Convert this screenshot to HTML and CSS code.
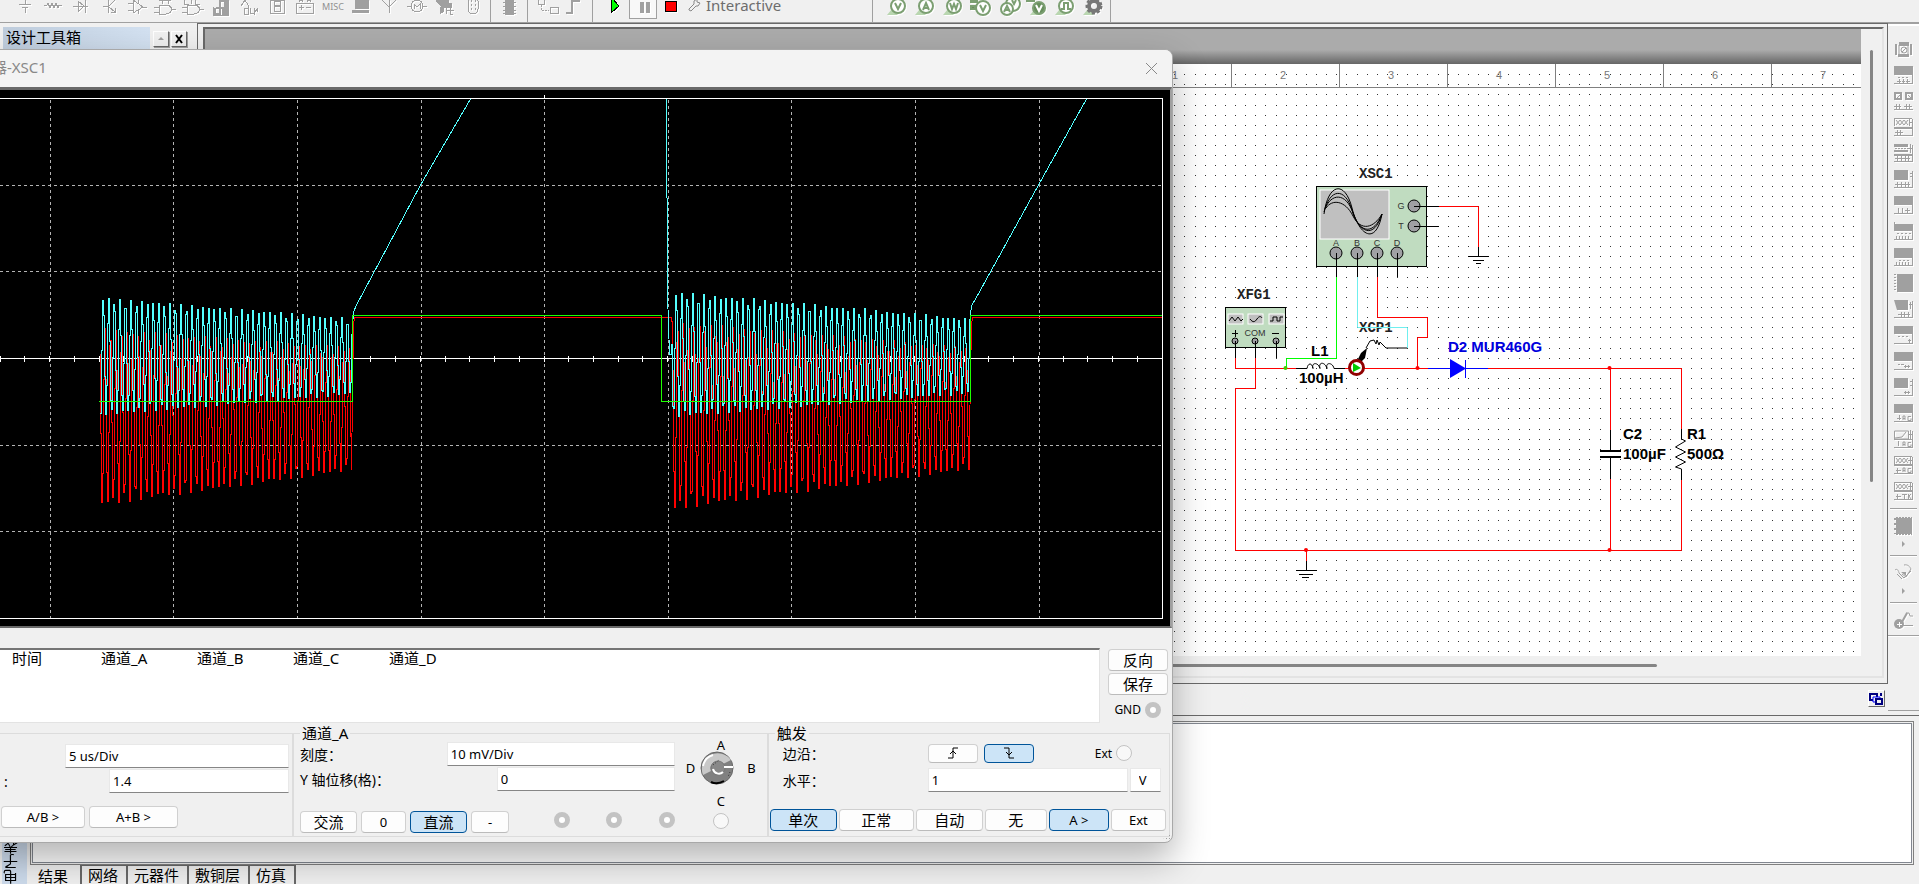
FILE: index.html
```html
<!DOCTYPE html>
<html lang="zh-CN">
<head>
    <meta charset="UTF-8">
    <meta name="viewport" content="width=device-width, initial-scale=1.0">
    <title>XSC1</title>
    <link rel="stylesheet" href="styles.css">
</head>
<body>
    <!-- Component, simulation and probe toolbars -->
    <header class="toolbar">
        <div class="tool-group components">
            <button class="tool" aria-label="Source"><svg viewBox="0 0 28 22"><path d="M8 4h12M11 7h6M14 0v4M14 7v6"/></svg></button>
            <button class="tool" aria-label="Basic"><svg viewBox="0 0 28 22"><path d="M5 5h3l1-2 2 5 2-5 2 5 2-5 2 5 1-3h3"/></svg></button>
            <button class="tool" aria-label="Diode"><svg viewBox="0 0 28 22"><path d="M6 6h15M11 1v11l6-6zM18 0v13"/></svg></button>
            <button class="tool" aria-label="Transistor"><svg viewBox="0 0 28 22"><path d="M8 6h5M13 0v13M14 6l6-6M14 7l6 5M16 12h4v-4"/></svg></button>
            <button class="tool" aria-label="Analog"><svg viewBox="0 0 28 22"><path d="M5 3h5M5 10h5M10 0v13l10-6zM20 7h4M15 0v3M15 10v4"/></svg></button>
            <button class="tool" aria-label="TTL"><svg viewBox="0 0 28 22"><path d="M8 0h12M11 0v4M17 0v4M8 5h7c4 0 5 2 6 4-1 3-2 5-6 5H8zM3 7h5M3 12h5M21 9h4"/></svg></button>
            <button class="tool" aria-label="CMOS"><svg viewBox="0 0 28 22"><path d="M5 0v4h5M12 0v4M16 0v4h5M8 5h7c4 0 5 2 6 4-1 3-2 5-6 5H8zM3 7h5M3 12h5M21 9h4"/></svg></button>
            <button class="tool" aria-label="Misc digital"><svg viewBox="0 0 28 22"><path stroke-width="2" d="M8 8v6h5V1h7v13h-4V8h-7M18 0v15"/><path d="M6 7v8h15V0"/></svg></button>
            <button class="tool" aria-label="Mixed"><svg viewBox="0 0 28 22"><path d="M6 6l4-6 3 5v3M9 8v6h4V8zM15 8v5l4 1V8M18 14l5-6M22 8v4"/></svg></button>
            <button class="tool" aria-label="Indicator"><svg viewBox="0 0 28 22"><path d="M7 0h14v13H7zM11 1h6v4h-6zM11 6h6v5h-6z"/></svg></button>
            <button class="tool" aria-label="Power"><svg viewBox="0 0 28 22"><path d="M5 3h17v10H5zM8 2V0h3v2M16 2V0h3v2M8 7h5M10 5v5M15 7h5"/></svg></button>
            <button class="tool misc">MISC</button>
            <button class="tool" aria-label="Advanced peripherals"><svg viewBox="0 0 28 22"><path class="solid" d="M8 0h14v9H8zM5 10h17v3H5z"/></svg></button>
            <button class="tool" aria-label="RF"><svg viewBox="0 0 28 22"><path d="M7 0l7 7 7-7M14 0v13"/></svg></button>
            <button class="tool" aria-label="Electromechanical"><svg viewBox="0 0 28 22"><circle cx="14" cy="6" r="6"/><path d="M4 6h4M20 6h4M11 9V4l3 3 3-3v5"/></svg></button>
            <button class="tool" aria-label="NI components"><svg viewBox="0 0 28 22"><path class="solid" d="M5 0h13v3h3v5h-10l-5-5zM9 7h4v5l-4 2z"/><path d="M15 8v6M19 6v8h3M16 10h7"/></svg></button>
            <button class="tool" aria-label="Connectors"><svg viewBox="0 0 28 22"><rect x="9" y="-4" width="10" height="18" rx="5"/><path stroke-dasharray="2 2" d="M12 0v12M16 0v12"/></svg></button>
        </div>
        <div class="tool-group">
            <button class="tool" aria-label="MCU"><svg viewBox="0 0 28 22"><path class="solid" d="M10 0h9v15h-9z"/><path d="M8 2h13M8 6h13M8 10h13M8 13h13"/></svg></button>
        </div>
        <div class="tool-group">
            <button class="tool" aria-label="Hierarchical block"><svg viewBox="0 0 28 22"><path d="M6 0v4h6V0M18 7h8v6h-8z"/><path stroke-dasharray="2 1" d="M9 5v5h8"/></svg></button>
            <button class="tool" aria-label="Bus"><svg viewBox="0 0 28 22"><path stroke-width="2" d="M6 13h6V1h8"/></svg></button>
        </div>
        <div class="tool-group simulate">
            <button class="tool" aria-label="Run"><svg viewBox="0 0 28 22"><path fill="#0f0" stroke="#000" d="M10 0v13l8-7-7-8z"/></svg></button>
            <button class="tool pause" aria-label="Pause"><svg viewBox="0 0 28 22"><path class="solid" d="M10 2h4v11h-4zM16 2h4v11h-4z"/></svg></button>
            <button class="tool" aria-label="Stop"><svg viewBox="0 0 28 22"><path fill="#f00" stroke="#000" d="M8 1h11v10H8z"/></svg></button>
            <button class="interactive"><svg viewBox="0 0 14 22"><path d="M2 9l5-5V1l3-2v3l3 1-2 3H9l-5 5-2-1z"/></svg>Interactive</button>
        </div>
        <div class="tool-group probes">
            <button class="tool" aria-label="Voltage probe"><svg viewBox="0 0 28 22"><path class="tip" d="M3 15l5-6 7 4-2 2z"/><circle cx="14" cy="6" r="7"/><path d="M11 3l3 6 3-6"/></svg></button>
            <button class="tool" aria-label="Current probe"><svg viewBox="0 0 28 22"><path class="tip" d="M3 15l5-6 7 4-2 2z"/><circle cx="14" cy="6" r="7"/><path d="M11 10l3-7 3 7M12 8h4"/></svg></button>
            <button class="tool" aria-label="Power probe"><svg viewBox="0 0 28 22"><path class="tip" d="M3 15l5-6 7 4-2 2z"/><circle cx="14" cy="6" r="7"/><path d="M10 3l2 6 2-5 2 5 2-6"/></svg></button>
            <button class="tool" aria-label="Differential probe"><svg viewBox="0 0 28 22"><path class="dark" d="M3 0h6v2H3zM3 6h4v3H3z"/><circle cx="15" cy="8" r="7"/><path d="M12 5l3 6 3-6"/></svg></button>
            <button class="tool" aria-label="Voltage and current probe"><svg viewBox="0 0 28 22"><circle cx="17" cy="4" r="7"/><circle cx="11" cy="9" r="6"/><path d="M8 12l3-6 3 6M9 10h4M16 0l2 4 2-4"/></svg></button>
            <button class="tool" aria-label="Reference probe"><svg viewBox="0 0 28 22"><path class="dark" d="M3 0h7v1H3z"/><path class="tip" d="M6 15l5-6 7 4-2 2z"/><circle class="dark" cx="15" cy="8" r="6"/><path class="light" d="M12 5l3 6 3-6"/></svg></button>
            <button class="tool" aria-label="Digital probe"><svg viewBox="0 0 28 22"><path class="tip" d="M3 15l5-6 7 4-2 2z"/><circle cx="14" cy="6" r="7"/><path d="M9 9h3V3h4v6h3"/></svg></button>
            <button class="tool" aria-label="Probe settings"><svg viewBox="0 0 28 22"><path class="tip" d="M3 15l5-6 7 4-2 2z"/><circle class="gear" cx="14" cy="6" r="5"/><circle class="gear teeth" cx="14" cy="6" r="7"/></svg></button>
        </div>
    </header>

    <main class="workspace">
        <aside class="dock">
            <div class="dock-head">
                <h2>设计工具箱</h2>
                <button class="dock-button up" aria-label="Collapse"></button>
                <button class="dock-button" aria-label="Close"><svg viewBox="0 0 10 10"><path d="M2 1l6 8M8 1L2 9"/></svg></button>
            </div>
        </aside>

        <section class="center">
            <div class="mdi-frame">
                <div class="mdi">
                    <div class="sheet-area">
                        <div class="sheet-shade"></div>
                        <div class="sheet">
                            <svg class="schematic" viewBox="1100 64 761 592">
                                <path id="gridDots" fill="#333"/>
                                <g class="ruler">
                                    <path d="M1100 87.500H1861M1231.500 64V87M1339.500 64V87M1447.500 64V87M1555.500 64V87M1663.500 64V87M1771.500 64V87"/>
                                    <text x="1175" y="79">1</text><text x="1283" y="79">2</text><text x="1391" y="79">3</text><text x="1499" y="79">4</text><text x="1607" y="79">5</text><text x="1715" y="79">6</text><text x="1823" y="79">7</text>
                                </g>

                                <!-- Oscilloscope XSC1 -->
                                <text class="ref" x="1359" y="178">XSC1</text>
                                <rect class="instrument" x="1316.500" y="186.500" width="110" height="80"/>
                                <rect class="screen" x="1320" y="190" width="69" height="49"/>
                                <path class="line" d="M1324 214C1328 183 1345 180 1352 208S1376 246 1382 214M1324 212C1330 188 1345 187 1352 210S1374 240 1382 214M1325 209C1331 193 1346 192 1353 213S1374 235 1382 214M1326 208C1332 199 1345 200 1353 216S1374 228 1382 214"/>
                                <g class="pin"><circle cx="1414" cy="206" r="6"/><circle cx="1414" cy="226" r="6"/><circle cx="1336" cy="253" r="6"/><circle cx="1357" cy="253" r="6"/><circle cx="1377" cy="253" r="6"/><circle cx="1397" cy="253" r="6"/></g>
                                <g class="pin-name"><text x="1401" y="209">G</text><text x="1401" y="229">T</text><text x="1336" y="246">A</text><text x="1357" y="246">B</text><text x="1377" y="246">C</text><text x="1397" y="246">D</text></g>
                                <path class="line" d="M1414 206.500H1439M1414 226.500H1439M1336.500 253V277M1357.500 253V277M1377.500 253V277M1397.500 253V277"/>
                                <path class="wire" d="M1439 206.500H1478.500V247"/>
                                <path class="line" d="M1478.500 247V256.500M1468 256.500H1489M1473 260.500H1484M1476 263.500H1481"/>

                                <!-- Function generator XFG1 -->
                                <text class="ref" x="1237" y="299">XFG1</text>
                                <rect class="instrument" x="1225.500" y="307.500" width="60" height="40"/>
                                <g class="screen"><rect x="1228" y="314" width="15" height="10"/><rect x="1248" y="314" width="15" height="10"/><rect x="1269" y="314" width="15" height="10"/></g>
                                <path class="line" d="M1229 321l3-4 3 4 3-4 3 4 2-2M1250 319c3 4 5 3 7 0s4-3 5-1M1270 321h3v-4h4v4h3v-4h3"/>
                                <path class="line" d="M1232 333.500h6M1235.500 330v7M1272 333.500h7"/>
                                <text class="com" x="1255" y="336">COM</text>
                                <g class="pin"><circle cx="1235" cy="341" r="3"/><circle cx="1255" cy="341" r="3"/><circle cx="1276" cy="341" r="3"/></g>
                                <path class="line" d="M1235.500 341V358M1255.500 341V358M1276.500 341V358"/>

                                <!-- Nets -->
                                <path class="wire" d="M1235.500 358V368.500H1296M1255.500 358V388.500H1235.500V550.500H1681.500V480M1345 368.500H1428M1488 368.500H1681.500V429M1610.500 368V430M1610.500 479V550M1377.500 277V317.500H1427.500V337.500H1417.500V368M1306.500 550V561"/>
                                <path class="wire green" d="M1336.500 277V358.500H1286.500V368"/>
                                <text class="ref" x="1359" y="332">XCP1</text>
                                <path class="wire cyan" d="M1357.500 277V327.500H1407.500V348"/>
                                <g class="node"><circle cx="1417.500" cy="368" r="2"/><circle cx="1609.500" cy="368" r="2"/><circle cx="1609.500" cy="550" r="2"/><circle cx="1306" cy="550" r="2"/><circle class="green" cx="1285.500" cy="368" r="2"/></g>
                                <path class="line" d="M1306.500 561V570.500M1296 570.500H1317M1299 574.500H1313M1302 577.500H1309"/>

                                <!-- L1 -->
                                <path class="line" d="M1296 368.500h11c1-6 5-6 6 0-2-6 5-7 7 0-2-7 5-7 7 0-2-7 6-6 7 0h11"/>
                                <text class="value" x="1311" y="356">L1</text>
                                <text class="value" x="1299" y="383">100µH</text>

                                <!-- XCP1 current clamp -->
                                <path d="M1357 361l4-8 6-5-2 10-4 4z"/>
                                <path class="line" d="M1366 348l4-7 4-1 2 4 1-4 2 5 1-3 2 2 4 4H1407"/>
                                <circle class="clamp" cx="1356.500" cy="367.500" r="7"/>
                                <path fill="#0c0" d="M1353 363l8 5-8 4z"/>

                                <!-- D2 -->
                                <path class="wire blue" d="M1428 368.500H1488M1465.500 360V378"/>
                                <path fill="#00f" d="M1450 359v19l16-9.500z"/>
                                <text class="value blue" x="1448" y="352">D2 MUR460G</text>

                                <!-- C2 and R1 -->
                                <path class="line" d="M1610.500 430V451M1610.500 457V479"/>
                                <path class="line plate" d="M1600 451H1621M1600 457H1621"/>
                                <path class="line" d="M1681.500 429V439l4 2-10 6 10 5-10 5 10 5-10 5 6 2V480"/>
                                <text class="value" x="1623" y="439">C2</text>
                                <text class="value" x="1623" y="459">100µF</text>
                                <text class="value" x="1687" y="439">R1</text>
                                <text class="value" x="1687" y="459">500Ω</text>
                            </svg>
                        </div>
                    </div>
                    <div class="scroll-v"><div class="thumb"></div></div>
                    <div class="scroll-h"><div class="thumb"></div></div>
                </div>
            </div>
            <div class="window-strip">
                <button class="windows-button" aria-label="Windows"><svg viewBox="0 0 15 14"><path d="M1 2h7v6H1z"/><path class="mid" d="M4 5h7v5H4z"/><path d="M7 7h6v5H7z"/><path d="M12 1v3"/></svg></button>
            </div>
        </section>

        <aside class="instruments">
            <button aria-label="Multimeter"><svg viewBox="0 0 19 18"><path class="solid" d="M5 2h10v4H5zM1 4h2v11H1zM16 4h2v11h-2zM4 14h11v3H4z"/><path d="M5 5v9M14 5v9"/><circle cx="10" cy="10" r="3"/><path d="M8 12l4-4"/></svg></button>
            <button aria-label="Function generator"><svg viewBox="0 0 19 18"><path class="solid" d="M0 0h19v9H0z"/><path d="M4 11.500h2M8 11.500h2M12 11.500h2M3 15.500h4M5.500 13v5M8 15.500h3M9.500 13v5M12 15.500h4M13.500 13v5M18.500 8v10M0 17.500h19"/></svg></button>
            <button aria-label="Wattmeter"><svg viewBox="0 0 19 18"><path stroke-width="2" d="M1 1h6v6H1zM12 1h6v6h-6z"/><path d="M3 6l3-3M14 3l3 3M0 14.500h7M2.500 12v5M5.500 12v5M10 14.500h8M12.500 12v5M15.500 12v5M0 17.500h19"/></svg></button>
            <button aria-label="Oscilloscope"><svg viewBox="0 0 19 18"><path class="solid" d="M0 9h19v2H0z"/><path d="M1 .500h17M.500 0v8M2 2l4 5 4-5 4 5M2 7l4-5 4 5 4-5M15.500 0v8M18.500 1v17M16 4.500h3M1 14.500h8M3.500 12v5M6.500 12v5M0 17.500h19"/></svg></button>
            <button aria-label="Four channel oscilloscope"><svg viewBox="0 0 19 18"><path class="solid" d="M0 0h14v3H0zM0 6h14v2H0zM0 10h19v2H0z"/><path stroke-dasharray="2 1" d="M1 4.500h13"/><path d="M16.500 0v9M14 4.500h5M18.500 1v17M1 14.500h15M3.500 12v5M7.500 12v5M11.500 12v5M14.500 12v5M0 17.500h19"/></svg></button>
            <button aria-label="Bode plotter"><svg viewBox="0 0 19 18"><path class="solid" d="M0 0h14v10H0z"/><path d="M16 3.500h3M16 6.500h3M18.500 1v17M1 14.500h15M3.500 12v5M7.500 12v5M11.500 12v5M14.500 12v5M0 17.500h19"/></svg></button>
            <button aria-label="Frequency counter"><svg viewBox="0 0 19 18"><path class="solid" d="M0 0h19v9H0z"/><path d="M4.500 12v5M8.500 12v5M11 14.500h5M13.500 12v5M18.500 9v9M0 17.500h19"/></svg></button>
            <button aria-label="Word generator"><svg viewBox="0 0 19 18"><path class="solid" d="M1 2h18v7H1z"/><path stroke-dasharray="2 2" d="M3 11.500h14"/><path d="M.500 0v9M2.500 14v3M5.500 14v3M8.500 14v3M11.500 14v3M14.500 14v3M18.500 9v9M0 17.500h19"/></svg></button>
            <button aria-label="Logic converter"><svg viewBox="0 0 19 18"><path class="solid" d="M0 0h19v10H0z"/><path stroke-dasharray="2 2" d="M5 12.500h10"/><path d="M2.500 14v3M5.500 14v3M8.500 14v3M11.500 14v3M14.500 14v3M18.500 9v9M0 17.500h19"/></svg></button>
            <button aria-label="Logic analyzer"><svg viewBox="0 0 19 18"><path class="solid" d="M3 0h16v18H3z"/><path stroke-dasharray="1 2" stroke-width="2" d="M1 0v18"/></svg></button>
            <button aria-label="IV analyzer"><svg viewBox="0 0 19 18"><path class="solid" d="M0 0h14v10H3z"/><path d="M16.500 2v7M18.500 1v17M4 14.500h12M7.500 12v5M10.500 12v5M14.500 12v5M15 4.500h4M0 17.500h19"/></svg></button>
            <button aria-label="Distortion analyzer"><svg viewBox="0 0 19 18"><path class="solid" d="M0 0h19v8H0z"/><path stroke-dasharray="2 2" d="M4 10.500h10"/><path d="M14 14.500h3M15.500 13v4M18.500 8v10M0 17.500h19"/></svg></button>
            <button aria-label="Spectrum analyzer"><svg viewBox="0 0 19 18"><path class="solid" d="M0 0h19v9H0z"/><path d="M4 12.500h2M7 12.500h3M10 14.500h6M11.500 13v3M14.500 13v3M18.500 9v9M0 17.500h19"/></svg></button>
            <button aria-label="Network analyzer"><svg viewBox="0 0 19 18"><path class="solid" d="M0 0h14v10H0z"/><path d="M16 3.500h3M16 7.500h3M18.500 1v17M10 14.500h6M11.500 13v3M14.500 13v3M0 17.500h19"/></svg></button>
            <button aria-label="Agilent function generator"><svg viewBox="0 0 19 18"><path class="solid" d="M0 0h19v9H0z"/><path d="M5.500 11v5M3 14.500h4M9 16v-4h2v4M9 14.500h2M17 12.500h-3v4h3v-2M18.500 9v9M0 17.500h19"/></svg></button>
            <button aria-label="Agilent multimeter"><svg viewBox="0 0 19 18"><path d="M.500 1h14v8H.500zM1 8l7-1 4-5M16.500 0v9M14 4.500h5M18.500 1v17M4.500 11v5M9 16v-4h2v4M9 14.500h2M17 12.500h-3v4h3v-2M0 9.500h19M0 17.500h19"/></svg></button>
            <button aria-label="Agilent oscilloscope"><svg viewBox="0 0 19 18"><path class="solid" d="M0 8h19v2H0z"/><path d="M1 .500h17M.500 0v8M2 2l4 5 4-5 4 5M2 7l4-5 4 5 4-5M16.500 0v8M14 4.500h5M18.500 1v17M2 14.500h5M3.500 12v5M9 16v-4h2v4M9 14.500h2M17 12.500h-3v4h3v-2M0 17.500h19"/></svg></button>
            <button aria-label="Tektronix oscilloscope"><svg viewBox="0 0 19 18"><path class="solid" d="M0 8h19v2H0z"/><path d="M1 .500h17M.500 0v8M2 2l4 5 4-5 4 5M2 7l4-5 4 5 4-5M16.500 0v8M14 4.500h5M18.500 1v17M2 14.500h5M3.500 12v5M8 12.500h5M10.500 12v5M14.500 12v5M17 12l-2 2 2 3M0 17.500h19"/></svg></button>
            <hr>
            <button class="big" aria-label="LabVIEW instruments"><svg viewBox="0 0 19 18"><path class="solid" d="M2 1h16v16H2z"/><path stroke-dasharray="2 1" stroke-width="2" d="M2 1h16M2 17h16"/><path stroke-dasharray="2 3" stroke-width="2" d="M1 1v16"/></svg></button>
            <button class="more" aria-label="More LabVIEW instruments"></button>
            <hr>
            <button class="big" aria-label="NI ELVIS"><svg viewBox="0 0 19 18"><path d="M10 1c4-1 6 2 7 4l-5 8-4-3M1 6c2-2 4 1 4 3l5 5 7-7M3 10l5 5"/><path class="solid" d="M7 8h5v4z"/></svg></button>
            <button class="more" aria-label="More ELVIS instruments"></button>
            <hr>
            <button class="big" aria-label="Current clamp"><svg viewBox="0 0 19 18"><circle class="solid" cx="5" cy="13" r="5"/><path stroke-width="2" d="M8 11l5-9"/><path d="M12 2h3l1 3h3M8 14.500h11"/><path class="plus" d="M3 13.500h5M5.500 11v5"/></svg></button>
            <hr class="end">
        </aside>
    </main>

    <footer class="results">
        <div class="results-caption">电子表格视图</div>
        <div class="results-body">
            <div class="results-list"></div>
            <nav class="tabs">
                <button class="tab active">结果</button>
                <button class="tab">网络</button>
                <button class="tab">元器件</button>
                <button class="tab">敷铜层</button>
                <button class="tab">仿真</button>
            </nav>
        </div>
    </footer>

    <!-- Oscilloscope window, floats over the workspace -->
    <section class="scope">
        <div class="scope-title">
            <h1>器-XSC1</h1>
            <button class="close" aria-label="Close"><svg viewBox="0 0 13 13"><path d="M1 1l11 11M12 1L1 12"/></svg></button>
        </div>
        <div class="display">
            <svg viewBox="-12 90 1182 536">
                <path class="grid" d="M-12 185.500H1162M-12 271.500H1162M-12 445.500H1162M-12 531.500H1162M50.500 100V618M173.500 100V618M297.500 100V618M421.500 100V618M544.500 100V618M668.500 100V618M791.500 100V618M915.500 100V618M1039.500 100V618"/>
                <path class="frame" d="M-12 98.500H1162.500V618.500H-12M544.500 95V98M-12 358.500H1162"/>
                <path class="frame" id="axisTicks"/>
                <path class="trace c" id="traceC"/>
                <path class="trace b" id="traceB"/>
                <path class="trace a" d="M99 401.500H352.500V315.500H661.500V401.500H970.500V315.500H1162"/>
            </svg>
        </div>

        <div class="readout-row">
            <div class="readout">
                <table>
                    <tr><th>时间</th><th>通道_A</th><th>通道_B</th><th>通道_C</th><th>通道_D</th></tr>
                </table>
            </div>
            <div class="readout-side">
                <button class="btn">反向</button>
                <button class="btn">保存</button>
                <label class="gnd">GND <input type="radio" name="gnd" disabled></label>
            </div>
        </div>

        <div class="controls">
            <fieldset class="timebase">
                <div class="field"><input class="text scale" type="text" aria-label="Timebase scale" value="5 us/Div"></div>
                <div class="field"><label for="xpos">:</label><input class="text pos" id="xpos" type="text" value="1.4"></div>
                <div class="btn-row">
                    <button class="btn w84">A/B &gt;</button>
                    <button class="btn w88">A+B &gt;</button>
                </div>
            </fieldset>

            <fieldset class="channel">
                <legend>通道_A</legend>
                <div class="channel-main">
                    <div class="field"><label for="chScale">刻度：</label><input class="text scale" id="chScale" type="text" value="10 mV/Div"></div>
                    <div class="field"><label for="chPos">Y 轴位移(格)：</label><input class="text pos" id="chPos" type="text" value="0"></div>
                    <div class="btn-row">
                        <button class="btn w57">交流</button>
                        <button class="btn w44">0</button>
                        <button class="btn w57 on">直流</button>
                        <button class="btn w38">-</button>
                        <div class="ports">
                            <input type="radio" name="port" aria-label="A" disabled>
                            <input type="radio" name="port" aria-label="B" disabled>
                            <input type="radio" name="port" aria-label="D" disabled>
                        </div>
                    </div>
                </div>
                <div class="selector">
                    <span>A</span>
                    <div class="selector-row">
                        <span>D</span>
                        <svg viewBox="0 0 36 34">
                            <circle cx="18" cy="17" r="16" fill="#808080" stroke="#666"/>
                            <path fill="#c8c8c8" d="M4 24A16 16 0 0 1 32 9L24 13A7 7 0 0 0 12 20z"/>
                            <path fill="none" stroke="#fff" stroke-width="2" d="M4 15A14 14 0 0 1 14 4"/>
                            <circle cx="19" cy="17" r="7" fill="#888" stroke="#777"/>
                            <path fill="none" stroke="#fff" stroke-width="2" d="M14 18a6 6 0 0 0 10 3M25 16h9"/>
                            <path fill="none" stroke="#000" stroke-width="2" d="M12 31q6 3 13-1"/>
                            <path fill="none" stroke="#333" stroke-dasharray="1 2" d="M14 14l6-5M31 21l-2 5"/>
                        </svg>
                        <span>B</span>
                    </div>
                    <label for="portC">C</label>
                    <input class="open" type="radio" id="portC" name="port">
                </div>
            </fieldset>

            <fieldset class="trigger">
                <legend>触发</legend>
                <div class="field edge">
                    <span>边沿：</span>
                    <button class="btn w50" aria-label="Rising edge"><svg viewBox="0 0 12 12"><path d="M1 11h5V1h5M3 7l3-3 3 3"/></svg></button>
                    <button class="btn w50 on" aria-label="Falling edge"><svg viewBox="0 0 12 12"><path d="M1 1h5v10h5M3 5l3 3 3-3"/></svg></button>
                    <label class="ext">Ext <input class="open" type="radio" name="ext"></label>
                </div>
                <div class="field level">
                    <label for="level">水平：</label>
                    <input class="text" id="level" type="text" value="1">
                    <input class="text unit" type="text" aria-label="Unit" value="V">
                </div>
                <div class="btn-row">
                    <button class="btn w67 on">单次</button>
                    <button class="btn w75">正常</button>
                    <button class="btn w67">自动</button>
                    <button class="btn w62">无</button>
                    <button class="btn w60 on">A &gt;</button>
                    <button class="btn w55">Ext</button>
                </div>
            </fieldset>
        </div>
        <div class="grip"></div>
    </section>

    <script src="script.js"></script>
</body>
</html>
```
FILE: styles.css
```css
* {
    box-sizing: border-box;
}

body {
    margin: 0;
    height: 100vh;
    display: flex;
    flex-direction: column;
    position: relative;
    overflow: hidden;
    background: #f0f0f0;
    color: #000;
    font-family: "Noto Sans", "Noto Sans CJK SC", sans-serif;
    font-size: 13px;
}

button {
    font: inherit;
    color: inherit;
    padding: 0;
    border: none;
    background: none;
}

h1, h2 {
    margin: 0;
    font-weight: normal;
}

/* Toolbar */
.toolbar {
    flex: none;
    display: flex;
    height: 23px;
    overflow: hidden;
    border-bottom: 1px solid #a0a0a0;
}

.tool-group {
    display: flex;
    padding: 0 4px;
    height: 22px;
    border-right: 1px solid #a0a0a0;
}

.tool-group.components {
    padding: 0 3px 0 11px;
}

.tool {
    width: 28px;
    height: 22px;
}

.tool svg {
    display: block;
    width: 28px;
    height: 22px;
    fill: none;
    stroke: #a0a0a0;
    shape-rendering: crispEdges;
    filter: drop-shadow(1px 1px 0 #fff);
}

.tool .solid {
    fill: #a0a0a0;
    stroke: none;
}

.tool.misc {
    height: 14px;
    line-height: 12px;
    font-size: 9px;
    color: #909090;
}

.tool-group.simulate {
    width: 280px;
    padding-left: 8px;
}

.tool.pause {
    height: 19px;
    border: 1px solid #a0a0a0;
    border-top: none;
    background: #f8f8f8;
}

.interactive {
    display: flex;
    height: 14px;
    line-height: 10px;
    margin-left: 2px;
    font-size: 15px;
    color: #6d6d6d;
}

.interactive svg {
    width: 14px;
    height: 22px;
    margin-right: 5px;
    fill: none;
    stroke: #888;
}

.probes {
    width: 238px;
    padding-left: 11px;
}

.probes .tool svg {
    stroke: #7c9f72;
    stroke-width: 2;
    shape-rendering: auto;
}

.probes circle {
    fill: #fff;
}

.probes .tip {
    fill: #b9d6b0;
    stroke: none;
}

.probes .dark {
    fill: #688f5d;
}

.probes .tool .light {
    stroke: #fff;
}

.probes .gear {
    fill: none;
    stroke: #777;
    stroke-width: 4;
}

.probes .teeth {
    stroke-width: 3;
    stroke-dasharray: 3 2;
}

/* Workspace */
.workspace {
    flex: 1;
    min-height: 0;
    display: flex;
}

.dock {
    width: 197px;
    padding: 4px 10px 0 3px;
}

.dock-head {
    display: flex;
    align-items: center;
    gap: 2px;
    height: 23px;
}

.dock-head h2 {
    width: 147px;
    height: 23px;
    padding-left: 3px;
    margin-right: 1px;
    line-height: 20px;
    font-size: 15px;
    background: linear-gradient(90deg, #bfcddd, #d3e1f1);
}

.dock-button {
    display: flex;
    align-items: center;
    justify-content: center;
    width: 16px;
    height: 16px;
    border: 1px solid #696969;
    border-top-color: #fff;
    border-left-color: #fff;
    box-shadow: 1px 1px 0 #a0a0a0;
}

.dock-button svg {
    width: 10px;
    height: 10px;
    fill: none;
    stroke: #000;
    stroke-width: 2;
}

.dock-button.up::after {
    content: "";
    border: 3px solid transparent;
    border-top: none;
    border-bottom-color: #a0a0a0;
}

.center {
    flex: 1;
    min-width: 0;
    display: flex;
    flex-direction: column;
}

.mdi-frame {
    flex: 1;
    min-height: 0;
    padding: 3px 3px 5px 5px;
    border: 1px solid #696969;
    display: flex;
}

.mdi {
    flex: 1;
    display: grid;
    grid-template-columns: 1fr 21px;
    grid-template-rows: 1fr 20px;
    border: 2px solid #696969;
    border-right-color: #e3e3e3;
    border-bottom-color: #e3e3e3;
    overflow: hidden;
}

.sheet-area {
    display: flex;
    flex-direction: column;
    min-height: 0;
    overflow: hidden;
}

.sheet-shade {
    flex: none;
    height: 35px;
    background: linear-gradient(#ababab 60%, #666);
}

.sheet {
    flex: 1;
    min-height: 0;
    display: flex;
    justify-content: flex-end;
    background: #fff;
}

.schematic {
    flex: none;
    width: 761px;
    height: 592px;
}

.scroll-v {
    padding: 21px 9px 0;
}

.scroll-v .thumb {
    width: 3px;
    height: 432px;
    border-radius: 2px;
    background: #858585;
}

.scroll-h {
    padding: 8px 204px 0 30px;
}

.scroll-h .thumb {
    height: 3px;
    border-radius: 2px;
    background: #858585;
}

.window-strip {
    display: flex;
    justify-content: flex-end;
    height: 31px;
    padding: 6px 3px 0 0;
}

.windows-button {
    width: 17px;
    height: 17px;
    border: 1px solid #696969;
    border-top-color: #fff;
    border-left-color: #fff;
}

.windows-button svg {
    display: block;
    width: 15px;
    height: 14px;
    fill: #f0f0f0;
    stroke: #000080;
    stroke-width: 2;
}

.windows-button .mid {
    stroke: #00f;
    stroke-width: 1;
}

/* Schematic */
.schematic text {
    font-family: "Liberation Sans", Arial, sans-serif;
}

.schematic .ruler path {
    stroke: #808080;
}

.schematic .ruler text {
    font-size: 11px;
    fill: #777;
    text-anchor: middle;
}

.schematic .ref {
    font-family: "Liberation Mono", "Courier New", monospace;
    font-size: 14px;
    font-weight: bold;
    fill: #222;
}

.schematic .value {
    font-size: 15px;
    font-weight: bold;
}

.schematic .value.blue {
    fill: #00d;
}

.schematic .line {
    fill: none;
    stroke: #000;
}

.schematic .plate {
    stroke-width: 2;
}

.schematic .wire {
    fill: none;
    stroke: #f00;
}

.schematic .wire.green {
    stroke: #0f0;
}

.schematic .wire.cyan {
    stroke: #6fefef;
}

.schematic .wire.blue {
    stroke: #00f;
}

.schematic .node circle {
    fill: #f00;
}

.schematic .node .green {
    fill: #4c0;
}

.schematic .instrument {
    fill: #c0dcc0;
    stroke: #000;
}

.schematic .screen {
    fill: #c0c0c0;
    stroke: #fff;
}

.schematic .pin circle {
    fill: #a0a0a4;
    stroke: #000;
}

.schematic .pin-name text,
.schematic .com {
    font-size: 9px;
    fill: #333;
    text-anchor: middle;
}

.schematic .clamp {
    fill: #fff;
    stroke: #900000;
    stroke-width: 3;
}

/* Instrument bar */
.instruments {
    width: 31px;
    height: 688px;
    display: flex;
    flex-direction: column;
    align-items: center;
    padding: 16px 0 0 0;
    border-top: 1px solid #a0a0a0;
    border-bottom: 1px solid #a0a0a0;
    box-shadow: inset 0 2px 0 #fff;
}

.instruments button {
    width: 19px;
    height: 18px;
    margin-bottom: 8px;
    flex: none;
}

.instruments svg {
    display: block;
    width: 19px;
    height: 18px;
    fill: none;
    stroke: #a0a0a0;
    overflow: visible;
    filter: drop-shadow(1px 1px 0 #fff);
}

.instruments .solid {
    fill: #a0a0a0;
    stroke: none;
}

.instruments .plus {
    stroke: #fff;
}

.instruments hr {
    width: 27px;
    height: 1px;
    margin: 0 0 8px;
    border: none;
    background: #a0a0a0;
    box-shadow: 0 1px 0 #fff;
    flex: none;
}

.instruments hr.end {
    width: 100%;
}

.instruments .big {
    margin-bottom: 6px;
}

.instruments .more {
    width: 0;
    height: 0;
    border: 3px solid transparent;
    border-right: none;
    border-left-color: #a0a0a0;
}

/* Results panel */
.results {
    flex: none;
    height: 169px;
    display: flex;
    padding: 7px 7px 0 2px;
    border-top: 1px solid #696969;
}

.results-caption {
    width: 25px;
    line-height: 18px;
    font-size: 15px;
    writing-mode: vertical-rl;
    transform: rotate(180deg);
    background: #cddbec;
    text-align: left;
    overflow: hidden;
}

.results-body {
    flex: 1;
    display: flex;
    flex-direction: column;
    margin-left: 5px;
}

.results-list {
    height: 140px;
    border: 1px solid #828790;
    background: #fff;
    outline: 1px solid #808080;
    outline-offset: 1px;
}

.tabs {
    display: flex;
    height: 19px;
    margin: 2px 0 0 -4px;
}

.tab {
    padding: 0 8px 0 6px;
    line-height: 18px;
    font-size: 15px;
    border-right: 2px solid #696969;
    border-top: 1px solid #696969;
    overflow: hidden;
}

.tab.active {
    width: 54px;
    border-top: none;
    line-height: 22px;
}

/* Oscilloscope window */
.scope {
    position: absolute;
    left: -13px;
    top: 49px;
    width: 1186px;
    background: #f0f0f0;
    border: 1px solid #a8a8a8;
    border-radius: 8px;
    box-shadow: 0 16px 36px rgba(0, 0, 0, 0.3);
    overflow: hidden;
}

.scope-title {
    display: flex;
    align-items: center;
    justify-content: space-between;
    height: 37px;
    padding: 0 14px 0 4px;
    background: #f3f3f3;
}

.scope-title h1 {
    line-height: 20px;
    padding-bottom: 3px;
    font-size: 15px;
    color: #888;
}

.close svg {
    display: block;
    width: 13px;
    height: 13px;
    fill: none;
    stroke: #888;
}

.display {
    border-top: 3px solid #696969;
    border-right: 2px solid #a0a0a0;
    border-bottom: 2px solid #696969;
    background: #000;
}

.display svg {
    display: block;
    width: 100%;
    shape-rendering: crispEdges;
}

.display path {
    fill: none;
}

.display .grid {
    stroke: #b4b4b4;
    stroke-dasharray: 3 3;
}

.display .frame {
    stroke: #fff;
}

.trace.a {
    stroke: #1eff00;
}

.trace.b {
    stroke: #54ffff;
}

.trace.c {
    stroke: #f00;
}

.readout-row {
    display: flex;
    margin-top: 20px;
    height: 75px;
}

.readout {
    flex: 1;
    background: #fff;
    border-top: 2px solid #757575;
    border-right: 1px solid #e3e3e3;
    border-bottom: 1px solid #e3e3e3;
}

.readout table {
    margin-left: 24px;
    border-collapse: collapse;
    table-layout: fixed;
}

.readout th {
    width: 96px;
    padding: 0;
    line-height: 16px;
    font-size: 15px;
    font-weight: normal;
    text-align: left;
}

.readout th:first-child {
    width: 89px;
}

.readout-side {
    display: flex;
    flex-direction: column;
    gap: 2px;
    width: 60px;
    margin: 1px 4px 0 8px;
}

.readout-side .btn {
    height: 22px;
    flex: none;
}

.btn {
    display: flex;
    align-items: center;
    justify-content: center;
    height: 22px;
    line-height: 18px;
    border: 1px solid #d0d0d0;
    border-bottom-color: #bbb;
    border-radius: 4px;
    background: #fdfdfd;
}

.readout-side .btn,
.w57,
.w67,
.w75,
.w62 {
    font-size: 15px;
}

.btn.on {
    background: #cce4f7;
    border-color: #005499;
}

.btn svg {
    width: 12px;
    height: 12px;
    fill: none;
    stroke: #000;
}

.w38 { width: 38px; }
.w44 { width: 45px; }
.w50 { width: 50px; }
.w55 { width: 55px; }
.w57 { width: 57px; }
.w60 { width: 60px; }
.w62 { width: 62px; }
.w67 { width: 67px; }
.w75 { width: 75px; }
.w84 { width: 84px; }
.w88 { width: 89px; }

.gnd,
.ext {
    display: flex;
    align-items: center;
    justify-content: flex-end;
    gap: 4px;
    font-size: 12px;
}

.gnd {
    padding: 4px 7px 0 0;
}

input[type="radio"] {
    appearance: none;
    width: 16px;
    height: 16px;
    margin: 0;
    border: 5px solid #c3c3c3;
    border-radius: 50%;
    background: #fff;
}

input[type="radio"].open {
    border: 1px solid #c3c3c3;
    background: #f8f8f8;
}

/* Control groups */
.controls {
    display: flex;
    padding: 4px 2px 5px 0;
}

fieldset {
    min-width: 0;
    margin: 0;
    padding: 0;
    border: 1px solid #dcdcdc;
    height: 110px;
}

legend {
    margin-left: 6px;
    padding: 0 2px;
    height: 12px;
    line-height: 12px;
    font-size: 15px;
}

.field {
    display: flex;
    align-items: center;
    justify-content: space-between;
    height: 24px;
    margin-bottom: 1px;
    font-size: 14px;
}

.text {
    height: 24px;
    padding: 0 3px;
    font-family: inherit;
    font-size: 13px;
    border: 1px solid #e8e8e8;
    border-bottom-color: #868686;
    background: #fff;
}

.btn-row {
    display: flex;
    gap: 4px;
}

.timebase {
    width: 305px;
    height: 104px;
    margin-top: 6px;
    padding: 10px 3px 0 12px;
}

.timebase .scale {
    width: 224px;
    margin-left: auto;
}

.timebase .pos {
    width: 180px;
}

.timebase .field label {
    padding-left: 3px;
}

.timebase .btn-row {
    margin-top: 13px;
}

.channel {
    flex: 475;
    position: relative;
}

.channel-main {
    float: left;
    width: calc(100% - 92px);
    padding: 3px 0 0 6px;
}

.channel .scale {
    width: 228px;
}

.channel .pos {
    width: 178px;
}

.channel .btn-row {
    margin-top: 20px;
}

.ports {
    flex: 1;
    display: flex;
    align-items: center;
    justify-content: space-between;
    padding: 0 0 4px 41px;
}

.selector {
    float: right;
    width: 92px;
    display: flex;
    flex-direction: column;
    align-items: center;
}

.selector span,
.selector label {
    line-height: 12px;
}

.selector-row {
    display: flex;
    align-items: center;
    justify-content: center;
    gap: 4px;
    margin-bottom: 10px;
}

.selector-row svg {
    width: 36px;
    height: 34px;
    margin-right: 8px;
}

.selector .open {
    margin-top: 6px;
}

.trigger {
    flex: 402;
}

.trigger .field {
    padding-left: 14px;
}

.trigger .edge {
    justify-content: flex-start;
    gap: 6px;
    margin-top: 2px;
}

.edge .btn {
    height: 19px;
}

.edge span {
    width: 139px;
}

.level label {
    width: 145px;
}

.ext {
    margin-left: 55px;
}

.trigger .level {
    justify-content: flex-start;
    margin-top: 3px;
}

.level .text {
    width: 200px;
}

.level .unit {
    width: 31px;
    margin-left: 2px;
    padding-left: 8px;
}

.trigger .btn-row {
    gap: 2px;
    margin: 17px 2px 0 1px;
}

.grip {
    position: absolute;
    right: 2px;
    bottom: 2px;
    width: 8px;
    height: 6px;
    background: radial-gradient(#a0a0a0 1px, transparent 1px) 0 0 / 3px 3px;
    clip-path: polygon(100% 0, 100% 100%, 0 100%);
}
```
FILE: script.js
```js
// Sheet grid dots
var dots = '';
for (var i = -10; i <= 64; i++) {
    var x = 1205 + Math.floor(10.125 * i + 0.2);
    for (var j = 0; j <= 57; j++) {
        var y = 74 + Math.floor(10.125 * j + 0.65);
        dots += 'M' + x + ' ' + y + 'h1v1h-1z';
    }
}
document.getElementById('gridDots').setAttribute('d', dots);

// Minor ticks on the time axis
var ticks = '';
for (var t = -22; t <= 25; t++) {
    var tx = Math.floor(544 + t * 24.72) + 0.5;
    ticks += 'M' + tx + ' 356V362';
}
document.getElementById('axisTicks').setAttribute('d', ticks);

// Decaying ringing between x0 and x1, top and bottom envelopes are [start, end]
function ringing(x0, x1, peak, top, bottom) {
    var d = '';
    for (var x = x0; x <= x1; x++) {
        var k = (x - x0) / (x1 - x0);
        var hi = top[0] + (top[1] - top[0]) * k;
        var lo = bottom[0] + (bottom[1] - bottom[0]) * k;
        var c = Math.cos(2 * Math.PI * (x - peak) / 5.55);
        var y = (hi + lo) / 2 - c * (lo - hi) / 2;
        d += 'H' + (x + 0.5) + 'V' + Math.round(y);
    }
    return d;
}

document.getElementById('traceC').setAttribute('d',
    'M99.5 354' + ringing(100, 351, 104, [328, 347], [505, 470]) +
    'L353.5 324L354.5 317.5H669.5' + ringing(671, 969, 676.6, [321, 347], [509, 469]) +
    'L971.5 324L972.5 317.5H1162');

document.getElementById('traceB').setAttribute('d',
    'M99.5 413' + ringing(101, 351, 102.3, [297, 318], [415, 394]) +
    'L353.5 312L356.5 305L420.5 185L470.5 99M666.5 99L667.5 294L669.5 354' +
    ringing(671, 969, 675.3, [291, 318], [417, 393]) +
    'L971.5 306L975.5 299L1038.5 185L1086.5 99');
```
